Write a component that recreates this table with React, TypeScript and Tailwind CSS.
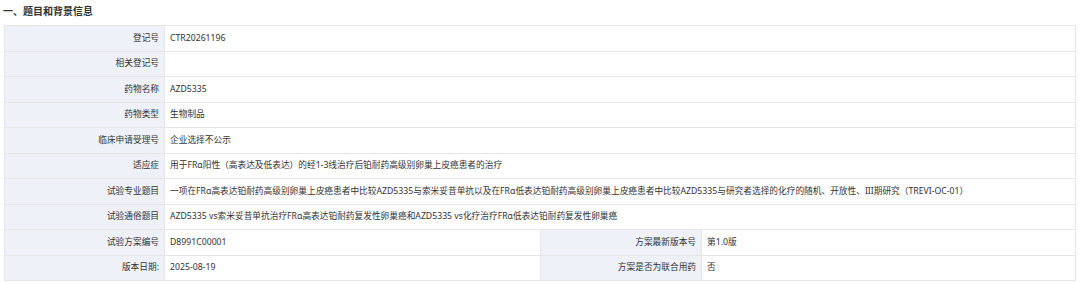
import React from "react";

const rows: { label: string; value: string }[] = [
  { label: "登记号", value: "CTR20261196" },
  { label: "相关登记号", value: "" },
  { label: "药物名称", value: "AZD5335" },
  { label: "药物类型", value: "生物制品" },
  { label: "临床申请受理号", value: "企业选择不公示" },
  { label: "适应症", value: "用于FRα阳性（高表达及低表达）的经1-3线治疗后铂耐药高级别卵巢上皮癌患者的治疗" },
  {
    label: "试验专业题目",
    value:
      "一项在FRα高表达铂耐药高级别卵巢上皮癌患者中比较AZD5335与索米妥昔单抗以及在FRα低表达铂耐药高级别卵巢上皮癌患者中比较AZD5335与研究者选择的化疗的随机、开放性、III期研究（TREVI-OC-01）",
  },
  { label: "试验通俗题目", value: "AZD5335 vs索米妥昔单抗治疗FRα高表达铂耐药复发性卵巢癌和AZD5335 vs化疗治疗FRα低表达铂耐药复发性卵巢癌" },
];

const labelCls = "bg-[#eef1f8] text-right pr-[5px] border border-[#e6e6e6] text-[#333] whitespace-nowrap";
const valueCls = "bg-white text-left pl-[5px] border border-[#e6e6e6] text-[#333] whitespace-nowrap";

export default function App() {
  return (
    <div
      className="bg-white w-[1080px] h-[284px] text-[8.7px] leading-none"
      style={{ fontFamily: '"Noto Sans", "Noto Sans CJK SC", sans-serif' }}
    >
      <div className="pl-[3px] pt-[6px] h-[25px] font-bold text-[10px] text-[#333]">一、题目和背景信息</div>
      <div className="px-[4px]">
        <table className="w-[1072px] border-collapse table-fixed">
          <colgroup>
            <col className="w-[160px]" />
            <col className="w-[376px]" />
            <col className="w-[161px]" />
            <col />
          </colgroup>
          <tbody>
            {rows.map((r) => (
              <tr key={r.label} className="h-[25.5px]">
                <td className={labelCls}>{r.label}</td>
                <td className={valueCls} colSpan={3}>
                  {r.value}
                </td>
              </tr>
            ))}
            <tr className="h-[25.5px]">
              <td className={labelCls}>试验方案编号</td>
              <td className={valueCls}>D8991C00001</td>
              <td className={labelCls}>方案最新版本号</td>
              <td className={valueCls}>第1.0版</td>
            </tr>
            <tr className="h-[25.5px]">
              <td className={labelCls}>版本日期:</td>
              <td className={valueCls}>2025-08-19</td>
              <td className={labelCls}>方案是否为联合用药</td>
              <td className={valueCls}>否</td>
            </tr>
          </tbody>
        </table>
      </div>
    </div>
  );
}
